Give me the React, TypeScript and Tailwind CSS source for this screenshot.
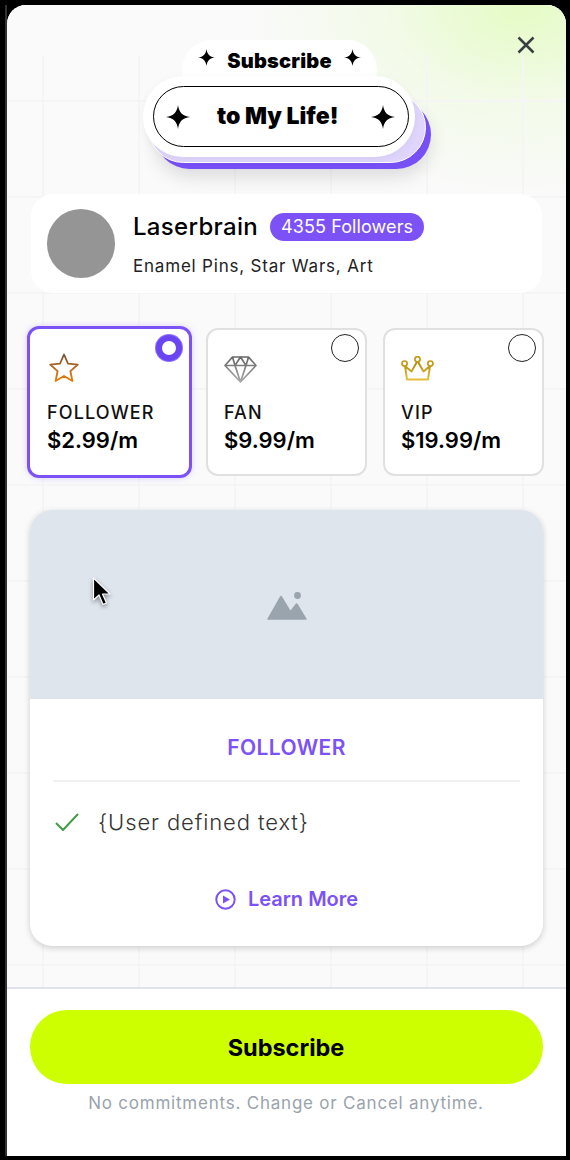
import React from "react";

const Sparkle = ({ size, className = "" }: { size: number; className?: string }) => (
  <svg width={size} height={size} viewBox="0 0 24 24" className={className} fill="#000">
    <path d="M12 0C12.9 7.4 16.6 11.1 24 12C16.6 12.9 12.9 16.6 12 24C11.1 16.6 7.4 12.9 0 12C7.4 11.1 11.1 7.4 12 0Z" />
  </svg>
);

const Star = () => (
  <svg width="30" height="30" viewBox="0 0 30 30" fill="none" className="ml-[2px]">
    <defs>
      <linearGradient id="starG" x1="0" y1="0" x2="0" y2="1">
        <stop offset="0" stopColor="#7a5238" />
        <stop offset="1" stopColor="#f07c00" />
      </linearGradient>
    </defs>
    <path d="M15 1.5L19 10.6L28.8 11.6L21.4 18.2L23.4 28L15 23L6.6 28L8.6 18.2L1.2 11.6L11 10.6Z" stroke="url(#starG)" strokeWidth="1.8" strokeLinejoin="round" />
  </svg>
);

const Diamond = () => (
  <svg width="33" height="27" viewBox="0 0 33 27" fill="none" className="mt-[3px]">
    <defs>
      <linearGradient id="diaG" x1="0" y1="0" x2="0" y2="1">
        <stop offset="0" stopColor="#666" />
        <stop offset="1" stopColor="#aaa" />
      </linearGradient>
    </defs>
    <path d="M8.5 1H24.5L32 9.5L16.5 26L1 9.5Z M1 9.5H32 M8.5 1L11 9.5L16.5 26L22 9.5L24.5 1 M11 9.5L16.5 1L22 9.5" stroke="url(#diaG)" strokeWidth="1.7" strokeLinejoin="round" />
  </svg>
);

const Crown = () => (
  <svg width="33" height="25" viewBox="0 0 33 25" fill="none">
    <defs>
      <linearGradient id="crG" x1="0" y1="0" x2="0" y2="1">
        <stop offset="0" stopColor="#a98608" />
        <stop offset="1" stopColor="#e8bc3e" />
      </linearGradient>
    </defs>
    <path d="M6 23.5H27L29 10L22.5 15.5L16.5 5L10.5 15.5L4 10Z" stroke="url(#crG)" strokeWidth="1.9" strokeLinejoin="round" />
    <circle cx="3.6" cy="7.6" r="2.6" fill="#fff" stroke="#c39c18" strokeWidth="1.7" />
    <circle cx="16.5" cy="3.2" r="2.6" fill="#fff" stroke="#c39c18" strokeWidth="1.7" />
    <circle cx="29.4" cy="7.6" r="2.6" fill="#fff" stroke="#c39c18" strokeWidth="1.7" />
  </svg>
);

const Tier = ({ icon, name, price, active, w }: { icon: React.ReactNode; name: string; price: string; active?: boolean; w: string }) => (
  <div
    className={`relative ${w} rounded-[12px] bg-white ${
      active ? "h-[152px] border-[3px] border-[#7c52f7] pl-[17px] shadow-[0_0_6px_rgba(124,82,247,0.25)]" : "h-[148px] border-2 border-[#e0e0e0] pl-[16px]"
    }`}
  >
    {active ? (
      <span className="absolute top-[6px] right-[7px] h-[26px] w-[26px] rounded-full border-[6px] border-[#6a45f2] bg-white ring-1 ring-[#8f74f9]" />
    ) : (
      <span className="absolute top-[4px] right-[6px] h-[28px] w-[28px] rounded-full border-[1.5px] border-[#222] bg-white" />
    )}
    <div className={`flex h-[32px] items-center ${active ? "mt-[23px]" : "mt-[22px]"}`}>{icon}</div>
    <div className="mt-[18px] text-[18px] leading-[22px] font-medium tracking-[1.15px] text-[#111]">{name}</div>
    <div className="mt-[1px] text-[22px] leading-[30px] font-semibold text-black">{price}</div>
  </div>
);

export default function App() {
  return (
    <div className="h-[1160px] w-[570px] overflow-hidden bg-black pt-[5px] pb-[4px] pl-[5px] pr-[4px] font-['Inter','Open_Sans',sans-serif]">
      <div className="h-full border-l-2 border-[#333]">
        <div className="flex h-full flex-col overflow-hidden rounded-t-[19px] bg-white">
          <div className="relative h-[984px] shrink-0 overflow-hidden border-b-2 border-[#e0e4ea] bg-[#fafafa]">
            <div className="absolute inset-0 bg-[radial-gradient(ellipse_270px_190px_at_92%_0%,#e6fbc8_5%,rgba(232,251,207,0.42)_50%,rgba(249,249,249,0)_100%)]" />
            <div className="absolute inset-x-0 top-[50px] bottom-0 bg-[linear-gradient(to_right,#f5f5f5_2px,transparent_2px),linear-gradient(to_bottom,#f5f5f5_2px,transparent_2px)] bg-[size:96px_96px] bg-[position:35px_45px]" />

            <div className="relative h-[189px] pt-[35px] pl-[136px]">
              <div className="relative h-[130px] w-[290px]">
                <div className="absolute top-[60px] left-[12px] h-[69px] w-[276px] rounded-[36px] bg-[#7650f5] shadow-[0_8px_18px_rgba(0,0,0,0.12)]" />
                <div className="absolute top-[52px] left-[5px] h-[71px] w-[278px] rounded-[36px] border border-white bg-[#e0d6fd]" />
                <div className="absolute top-0 left-[39px] flex h-[60px] w-[195px] items-start justify-center gap-[12px] rounded-[30px] bg-white pt-[9px]">
                  <Sparkle size={17} />
                  <span className="text-[20px] leading-[24px] font-black tracking-[0.2px] text-black">Subscribe</span>
                  <Sparkle size={17} />
                </div>
                <div className="absolute top-[36px] left-0 h-[81px] w-[272px] rounded-[40px] bg-white pt-[10px] pl-[10px] shadow-[0_2px_10px_rgba(0,0,0,0.05)]">
                  <div className="relative flex h-[61px] w-[256px] items-center justify-between rounded-[31px] border-[1.5px] border-black pr-[13px] pl-[11.5px]">
                    <Sparkle size={24} />
                    <span className="mr-[5px] mb-[2px] text-[23px] leading-[28px] font-black text-black">to My Life!</span>
                    <Sparkle size={24} />
                  </div>
                </div>
              </div>
              <svg width="18" height="18" viewBox="0 0 18 18" className="absolute top-[31px] right-[31px]" fill="none" stroke="#3a3d42" strokeWidth="2.5">
                <path d="M1.5 1.5L16.5 16.5M16.5 1.5L1.5 16.5" />
              </svg>
            </div>

            <div className="relative mx-[24px] flex h-[99px] w-[511px] items-center gap-[18px] rounded-[22px] bg-white pl-[16px]">
              <div className="h-[69px] w-[68px] shrink-0 rounded-full bg-[#959595]" />
              <div className="pt-[2px]">
                <div className="flex items-center gap-[12px]">
                  <span className="text-[24px] leading-[30px] font-medium tracking-[0.3px] text-black">Laserbrain</span>
                  <span className="rounded-[14px] bg-[#7c52f7] px-[11px] text-[18px] leading-[28px] tracking-[0.1px] text-white">4355 Followers</span>
                </div>
                <div className="mt-[13px] text-[17px] leading-[22px] tracking-[0.8px] text-[#222]">Enamel Pins, Star Wars, Art</div>
              </div>
            </div>

            <div className="relative mt-[33px] ml-[20px] flex items-center gap-[14px]">
              <Tier icon={<Star />} name="FOLLOWER" price="$2.99/m" active w="w-[165px]" />
              <Tier icon={<Diamond />} name="FAN" price="$9.99/m" w="w-[161px]" />
              <Tier icon={<Crown />} name="VIP" price="$19.99/m" w="ml-[2px] w-[161px]" />
            </div>

            <div className="relative mt-[32px] ml-[23px] h-[436px] w-[513px] overflow-hidden rounded-[22px] bg-white shadow-[0_2px_6px_rgba(0,0,0,0.18)]">
              <div className="relative flex h-[189px] items-center justify-center bg-[#dfe5ec]">
                <svg width="40" height="28" viewBox="0 0 40 28" fill="#99a4ad" className="mt-[2px]">
                  <circle cx="30.5" cy="3.5" r="3.4" />
                  <path d="M0.5 26.5L13 4.5C13.5 3.6 14.5 3.6 15 4.5L23.5 18.5L28.5 12C29.2 11 30 11 30.7 12L39.5 26.5C39.9 27.2 39.6 27.8 39 27.8H1C0.4 27.8 0.1 27.2 0.5 26.5Z" />
                </svg>
                <svg width="22" height="32" viewBox="0 0 22 32" className="absolute top-[66px] left-[61px] drop-shadow-[0_2px_2px_rgba(0,0,0,0.4)]">
                  <path d="M2.5 2V24L8 19L12 28.5L15.5 27L11.5 18H19Z" fill="#000" stroke="#fff" strokeWidth="1.2" strokeLinejoin="round" />
                </svg>
              </div>
              <div className="mt-[37px] text-center text-[21px] leading-[24px] font-semibold tracking-[0.4px] text-[#7c52f7]">FOLLOWER</div>
              <div className="mx-[23px] mt-[20px] h-[2px] bg-[#f1f1f1]" />
              <div className="mt-[26px] ml-[25px] flex items-center gap-[19px]">
                <svg width="24" height="18" viewBox="0 0 24 18" fill="none" stroke="#3f9c47" strokeWidth="2">
                  <path d="M1 10L8 17L23 1" />
                </svg>
                <span className="text-[22px] leading-[28px] font-light tracking-[0.9px] text-[#333]">{"{User defined text}"}</span>
              </div>
              <div className="mt-[50px] flex items-center justify-center gap-[12px]">
                <svg width="21" height="21" viewBox="0 0 21 21" fill="none">
                  <circle cx="10.5" cy="10.5" r="9.2" stroke="#7c52f7" strokeWidth="2" />
                  <path d="M8 6.5L15 10.5L8 14.5Z" fill="#7c52f7" />
                </svg>
                <span className="text-[20px] leading-[26px] font-semibold text-[#7c52f7]">Learn More</span>
              </div>
            </div>
          </div>

          <div className="flex flex-1 flex-col items-center bg-white pt-[21px]">
            <button className="ml-[-1px] h-[74px] w-[513px] rounded-[37px] bg-[#cdff00] pt-[2px] text-[23.5px] font-bold text-black">Subscribe</button>
            <div className="mt-[8px] ml-[-1px] text-[17px] leading-[22px] tracking-[0.78px] text-[#9aa3ad]">No commitments. Change or Cancel anytime.</div>
          </div>
        </div>
      </div>
    </div>
  );
}
